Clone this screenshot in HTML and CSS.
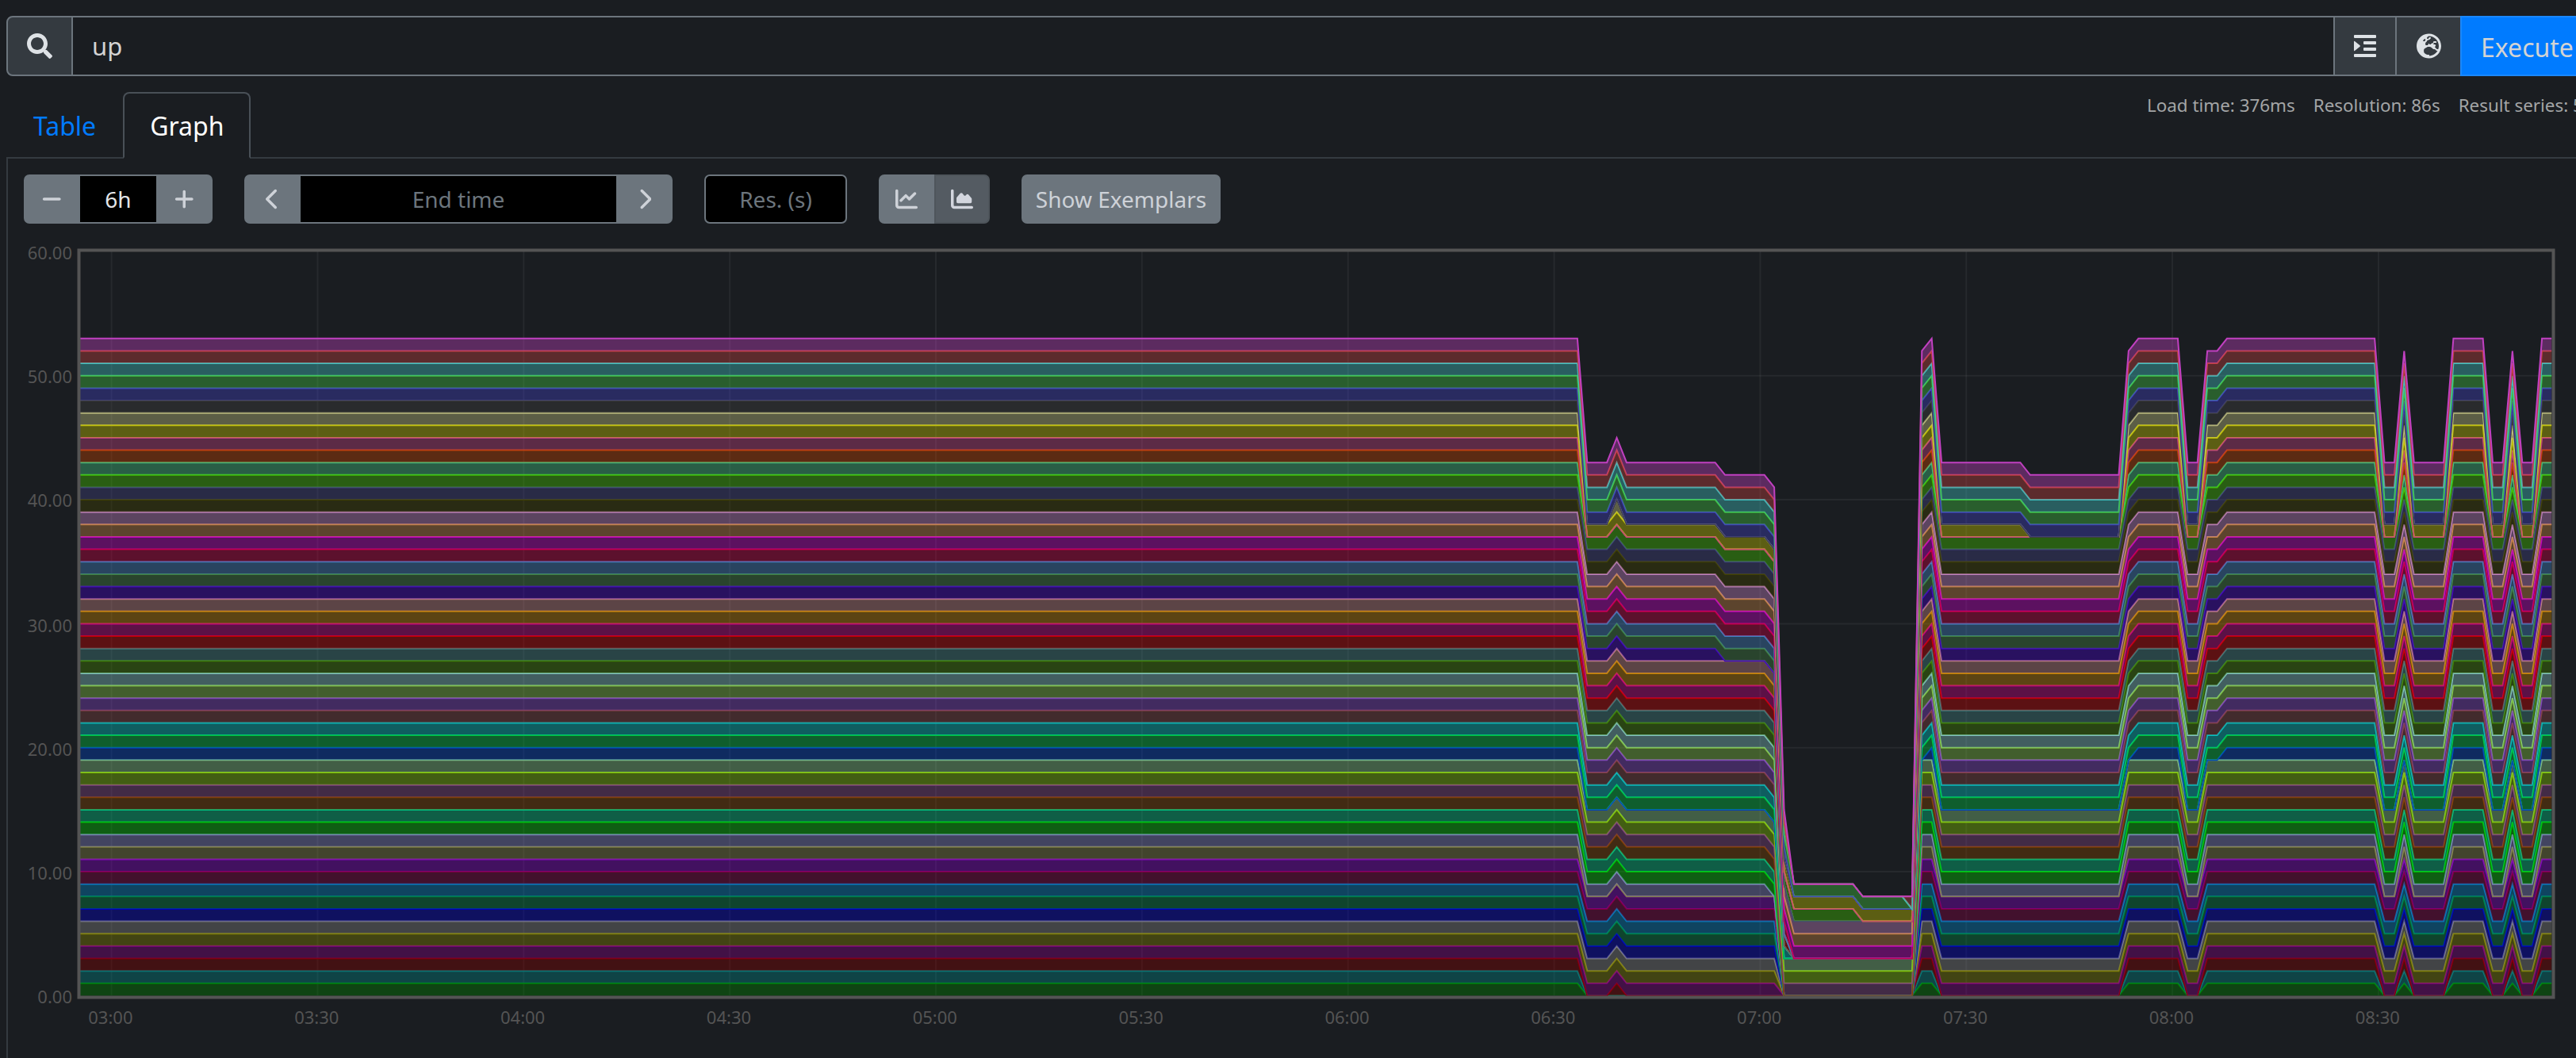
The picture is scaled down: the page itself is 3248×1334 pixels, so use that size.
FILE: index.html
```html
<!DOCTYPE html>
<html lang="en">
<head>
<meta charset="utf-8">
<title>Prometheus</title>
<link rel="stylesheet" href="styles.css">
</head>
<body>
<div class="app">
  <div class="query">
    <span class="addon search">
      <svg width="32" height="32" viewBox="0 0 512 512"><path d="M505 442.7L405.3 343c-4.5-4.5-10.6-7-17-7H372c27.6-35.3 44-79.7 44-128C416 93.1 322.9 0 208 0S0 93.1 0 208s93.1 208 208 208c48.3 0 92.7-16.4 128-44v16.3c0 6.4 2.5 12.5 7 17l99.7 99.7c9.4 9.4 24.6 9.4 33.9 0l28.3-28.3c9.4-9.4 9.4-24.6.1-34zM208 336c-70.7 0-128-57.2-128-128 0-70.7 57.2-128 128-128 70.7 0 128 57.2 128 128 0 70.7-57.2 128-128 128z"/></svg>
    </span>
    <div class="expression">up</div>
    <span class="addon format">
      <svg width="28" height="28" viewBox="0 0 28 28"><rect width="28" height="4" rx="1"/><rect x="12" y="8" width="16" height="4" rx="1"/><rect x="12" y="16" width="16" height="4" rx="1"/><rect y="24" width="28" height="4" rx="1"/><path d="M0 8.4Q0 7.3 1 8L7.6 13.3Q8.3 14 7.6 14.7L1 20Q0 20.7 0 19.6Z"/></svg>
    </span>
    <span class="addon globe">
      <svg width="31" height="32" viewBox="0 0 496 512"><path d="M248 8C111 8 0 119 0 256s111 248 248 248 248-111 248-248S385 8 248 8zm200 248c0 22.5-3.9 44.2-10.8 64.4h-20.3c-4.3 0-8.4-1.7-11.4-4.8l-32-32.6c-4.5-4.6-4.5-12.1.1-16.7l12.5-12.5v-8.7c0-3-1.2-5.9-3.3-8l-9.4-9.4c-2.1-2.1-5-3.3-8-3.3h-16c-6.2 0-11.3-5.1-11.3-11.3 0-3 1.2-5.9 3.3-8l9.4-9.4c2.1-2.1 5-3.3 8-3.3h32c6.2 0 11.3-5.1 11.3-11.3v-9.4c0-6.2-5.1-11.3-11.3-11.3h-36.7c-8.8 0-16 7.2-16 16v4.5c0 6.9-4.4 13-10.9 15.2l-31.6 10.5c-3.3 1.1-5.5 4.1-5.5 7.6v2.3c0 4.4-3.6 8-8 8h-16c-4.4 0-8-3.6-8-8s-3.6-8-8-8H247c-3 0-5.8 1.7-7.2 4.4l-9.4 18.7c-2.7 5.4-8.2 8.8-14.3 8.8H194c-8.8 0-16-7.2-16-16V199c0-4.2 1.7-8.3 4.7-11.3l20.1-20.1c4.6-4.6 7.2-10.9 7.2-17.5 0-3.4 2.2-6.5 5.5-7.6l40-13.3c1.7-.6 3.2-1.5 4.4-2.7l26.8-26.8c2.1-2.1 3.3-5 3.3-8 0-6.2-5.1-11.3-11.3-11.3H258l-16 16v8c0 4.4-3.6 8-8 8h-16c-4.4 0-8-3.6-8-8v-20c0-2.5 1.2-4.9 3.2-6.4l28.9-21.7c1.9-.1 3.8-.3 5.7-.3C358.3 56 448 145.7 448 256zM130.1 149.1c0-3 1.2-5.9 3.3-8l25.4-25.4c2.1-2.1 5-3.3 8-3.3 6.2 0 11.3 5.1 11.3 11.3v16c0 3-1.2 5.9-3.3 8l-9.4 9.4c-2.1 2.1-5 3.3-8 3.3h-16c-6.2 0-11.3-5.1-11.3-11.3zm128 306.4v-7.1c0-8.8-7.2-16-16-16h-20.2c-10.8 0-26.7-5.3-35.4-11.8l-22.2-16.7c-11.5-8.6-18.2-22.1-18.2-36.4v-23.9c0-16 8.4-30.8 22.1-39l42.9-25.7c7.1-4.2 15.2-6.5 23.4-6.5h31.2c10.9 0 21.4 3.9 29.6 10.9l43.2 37.1h18.3c8.5 0 16.6 3.4 22.6 9.4l17.3 17.3c3.4 3.4 8.1 5.3 12.9 5.3H423c-32.4 58.9-93.8 99.5-164.9 103.1z"/></svg>
    </span>
    <button class="execute">Execute</button>
  </div>

  <div class="tabs">
    <span class="tab">Table</span>
    <span class="tab active">Graph</span>
    <div class="stats"><span>Load time: 376ms</span><span>Resolution: 86s</span><span>Result series: 53</span></div>
  </div>

  <div class="panel">
    <div class="controls">
      <div class="group range">
        <button class="btn"><svg width="24.5" height="28" viewBox="0 0 448 512"><path d="M432 256c0 17.7-14.3 32-32 32L48 288c-17.7 0-32-14.3-32-32s14.3-32 32-32l352 0c17.7 0 32 14.3 32 32z"/></svg></button>
        <span class="field">6h</span>
        <button class="btn"><svg width="24.5" height="28" viewBox="0 0 448 512"><path d="M256 80c0-17.7-14.3-32-32-32s-32 14.3-32 32V224H48c-17.7 0-32 14.3-32 32s14.3 32 32 32H192V432c0 17.7 14.3 32 32 32s32-14.3 32-32V288H400c17.7 0 32-14.3 32-32s-14.3-32-32-32H256V80z"/></svg></button>
      </div>
      <div class="group endtime">
        <button class="btn"><svg width="17.5" height="28" viewBox="0 0 320 512"><path d="M9.4 233.4c-12.5 12.5-12.5 32.8 0 45.3l192 192c12.5 12.5 32.8 12.5 45.3 0s12.5-32.8 0-45.3L77.3 256 246.6 86.6c12.5-12.5 12.5-32.8 0-45.3s-32.8-12.5-45.3 0l-192 192z"/></svg></button>
        <span class="field hint">End time</span>
        <button class="btn"><svg width="17.5" height="28" viewBox="0 0 320 512"><path d="M310.6 233.4c12.5 12.5 12.5 32.8 0 45.3l-192 192c-12.5 12.5-32.8 12.5-45.3 0s-12.5-32.8 0-45.3L242.7 256 73.4 86.6c-12.5-12.5-12.5-32.8 0-45.3s32.8-12.5 45.3 0l192 192z"/></svg></button>
      </div>
      <span class="resolution">Res. (s)</span>
      <div class="group mode">
        <button class="btn"><svg width="28" height="28" viewBox="0 0 512 512"><path d="M64 64c0-17.7-14.3-32-32-32S0 46.3 0 64V400c0 44.2 35.8 80 80 80H480c17.7 0 32-14.3 32-32s-14.3-32-32-32H80c-8.8 0-16-7.2-16-16V64zm406.6 86.6c12.5-12.5 12.5-32.8 0-45.3s-32.8-12.5-45.3 0L320 210.7l-57.4-57.4c-12.5-12.5-32.8-12.5-45.3 0l-112 112c-12.5 12.5-12.5 32.8 0 45.3s32.8 12.5 45.3 0L240 221.3l57.4 57.4c12.5 12.5 32.8 12.5 45.3 0l128-128z"/></svg></button>
        <button class="btn pressed"><svg width="28" height="28" viewBox="0 0 512 512"><path d="M64 64c0-17.7-14.3-32-32-32S0 46.3 0 64V400c0 44.2 35.8 80 80 80H480c17.7 0 32-14.3 32-32s-14.3-32-32-32H80c-8.8 0-16-7.2-16-16V64zm96 288H448c17.7 0 32-14.3 32-32V251.8c0-7.6-2.7-15-7.7-20.8l-65.8-76.8c-12.1-14.2-33.7-15-46.9-1.8l-21 21c-10 10-26.4 9.2-35.4-1.6l-39.2-47c-12.6-15.1-35.7-15.4-48.7-.6L135.9 215c-5.1 5.8-7.9 13.3-7.9 21.1v84c0 17.7 14.3 32 32 32z"/></svg></button>
      </div>
      <button class="btn exemplars">Show Exemplars</button>
    </div>
    <svg class="chart" id="chart" width="3238" height="1034" viewBox="10 300 3238 1034"></svg>
  </div>
</div>
<script src="chart.js"></script>
</body>
</html>
```
FILE: styles.css
```css
* { box-sizing: border-box; }
html, body { margin: 0; overflow: hidden; }
body {
  width: 3248px;
  height: 1334px;
  background: #1a1d21;
  color: #d3d3d3;
  font: 32px "Noto Sans", sans-serif;
}
svg { display: block; }
button { font: inherit; color: inherit; margin: 0; }

.app { width: 3276px; height: 1334px; padding: 20px 12px 0 8px; }

/* expression bar */
.query { display: flex; height: 76px; }
.addon {
  display: flex;
  align-items: center;
  justify-content: center;
  background: #343a40;
  border: 2px solid #6c757d;
  fill: #dee2e6;
}
.search { width: 84px; border-radius: 8px 0 0 8px; }
.expression {
  width: 2850px;
  padding-left: 24px;
  border: solid #6c757d;
  border-width: 2px 0;
  font-size: 31px;
  line-height: 72px;
}
.format { width: 80px; }
.globe { width: 80px; border-left: 0; border-right: 0; }
.execute {
  flex: 1;
  padding: 2px 0 0 24px;
  border: 2px solid #1a88ff;
  border-radius: 0 8px 8px 0;
  background: #007bff;
  text-align: left;
}

/* tabs */
.tabs {
  display: flex;
  height: 104px;
  padding-top: 20px;
  border-bottom: 2px solid #343a40;
}
.tab {
  height: 84px;
  padding: 0 32px;
  border: 2px solid transparent;
  border-radius: 8px 8px 0 0;
  color: #007bff;
  line-height: 82px;
}
.tab.active {
  border-color: #495057;
  border-bottom-color: #1a1d21;
  color: #fff;
}
.stats {
  display: flex;
  gap: 23px;
  margin-left: auto;
  width: 557px;
  font-size: 22.4px;
  line-height: 34px;
  white-space: nowrap;
  color: #a3a5a6;
}

/* graph panel */
.panel { height: 1134px; border: solid #343a40; border-width: 0 2px; }
.controls {
  display: flex;
  gap: 40px;
  height: 100px;
  padding: 20px 0 18px 20px;
  font-size: 28px;
}
.group { display: flex; height: 62px; }
.btn {
  display: flex;
  align-items: center;
  justify-content: center;
  height: 62px;
  width: 71px;
  padding: 0;
  border: 0;
  background: #6c757d;
  fill: #ced2d8;
  color: #ced2d8;
}
.group .btn:first-child { border-radius: 7px 0 0 7px; }
.group .btn:last-child { border-radius: 0 7px 7px 0; }
.field {
  flex: 1;
  border: solid #6c757d;
  border-width: 2px 0;
  background: #000;
  color: #e3e5e8;
  line-height: 58px;
  text-align: center;
}
.hint { color: #6c757d; }
.range { width: 238px; }
.endtime { width: 540px; }
.resolution {
  width: 180px;
  height: 62px;
  border: 2px solid #6c757d;
  border-radius: 7px;
  background: #000;
  color: #6c757d;
  line-height: 58px;
  text-align: center;
}
.mode .btn { width: 70px; }
.mode .pressed { background: #545b62; border: 2px solid #4e555b; fill: #d3d6de; }
.btn.exemplars { width: 251px; border-radius: 7px; }

/* chart */
.grid { fill: none; stroke: #fff; stroke-opacity: .055; stroke-width: 2; }
.frame { fill: none; stroke: #545454; stroke-width: 4; }
.tick { fill: #545454; font-size: 22px; }
.area { fill-opacity: .4; }
.line { fill: none; stroke-width: 2; stroke-linejoin: miter; }
```
FILE: chart.js
```js
const NS = 'http://www.w3.org/2000/svg';
const chart = document.getElementById('chart');
const LEFT = 101, RIGHT = 3217.5, BASE = 1255.4, UNIT = 15.633;
const STEP = (RIGHT - LEFT + 0.5) * 86 / 21600;

function add(parent, name, attrs, text) {
  const el = document.createElementNS(NS, name);
  for (const key in attrs) el.setAttribute(key, attrs[key]);
  if (text) el.textContent = text;
  parent.appendChild(el);
  return el;
}

const colors = ('008000 008080 800000 800080 808000 808080 0000c0 008040 0080c0 800040 8000c0 ' +
  '808040 8080c0 00c000 00c080 804000 804080 80c000 80c080 0040c0 00c040 00c0c0 804040 8040c0 ' +
  '80c040 80c0c0 408000 408080 c00000 c00080 c08000 c08080 4000c0 408040 4080c0 c00040 c000c0 ' +
  'c08040 c080c0 404000 404080 40c000 40c080 c04000 c04080 c0c000 c0c080 404040 4040c0 40c040 ' +
  '40c0c0 c04040 c040c0').split(' ');

const all = colors.map((_, i) => i + 1);
const without = (list, ...gone) => list.filter(n => !gone.includes(n));
const down = without(all, 1, 2, 3, 12, 20, 43, 44, 45, 47, 48);
const nearly = without(all, 20);
const outage = [17, 18, 19, 37, 38, 39, 42, 46, 50];

// [last sample index of the run, targets that are up]; sample 99 is the right edge
const runs = [
  [0, all],
  [3, down],
  [4, down.concat(3, 47)],
  [14, down],
  [19, without(down, 33)],
  [20, without(down, 33, 13)],
  [21, [17, 18, 19, 22, 29, 36, 37, 38, 39, 42, 46, 49, 50, 51, 53]],
  [28, outage],
  [33, without(outage, 42)],
  [34, without(outage, 42, 50).concat(52)],
  [35, nearly],
  [36, all],
  [45, down],
  [55, without(down, 46)],
  [56, nearly],
  [61, all],
  [63, down],
  [65, nearly],
  [81, all],
  [83, down],
  [84, nearly],
  [88, down],
  [92, all],
  [94, down],
  [95, nearly],
  [97, down],
  [99, all]
];

const xs = [LEFT], samples = [all];
let run = 0;
for (let k = 0; k <= 99; k++) {
  if (k > runs[run][0]) run++;
  xs.push(RIGHT - (99 - k) * STEP);
  samples.push(runs[run][1]);
}

// grid
for (let h = 0; h < 12; h++) {
  const x = 140.6 + h * 259.85;
  add(chart, 'path', { class: 'grid', d: `M${x} 317V1255` });
  const label = String(3 + Math.floor(h / 2)).padStart(2, '0') + (h % 2 ? ':30' : ':00');
  add(chart, 'text', { class: 'tick', x: x - 1.2, y: 1291, 'text-anchor': 'middle' }, label);
}
const baselines = [1264.5, 1109, 953, 797, 639, 483, 327];
for (let v = 0; v <= 6; v++) {
  const y = BASE - v * 10 * UNIT;
  if (v > 0 && v < 6) add(chart, 'path', { class: 'grid', d: `M${LEFT} ${y}H${RIGHT}` });
  add(chart, 'text', { class: 'tick', x: 91, y: baselines[v], 'text-anchor': 'end' }, (v * 10).toFixed(2));
}

// stacked series
const clip = add(add(chart, 'defs', {}), 'clipPath', { id: 'plot' });
add(clip, 'rect', { x: LEFT, y: 310, width: RIGHT - LEFT, height: 946.5 });
const stack = add(chart, 'g', { 'clip-path': 'url(#plot)' });
let level = xs.map(() => 0);
colors.forEach((color, i) => {
  const next = level.map((v, p) => v + (samples[p].includes(i + 1) ? 1 : 0));
  const point = values => xs.map((x, p) => `${x.toFixed(2)} ${(BASE - values[p] * UNIT).toFixed(2)}`);
  const top = point(next);
  add(stack, 'path', { class: 'area', fill: '#' + color, d: 'M' + top.concat(point(level).reverse()).join('L') + 'Z' });
  add(stack, 'path', { class: 'line', stroke: '#' + color, d: 'M' + top.join('L') });
  level = next;
});

add(chart, 'rect', { class: 'frame', x: 99.5, y: 315.5, width: 3120, height: 942 });
```
